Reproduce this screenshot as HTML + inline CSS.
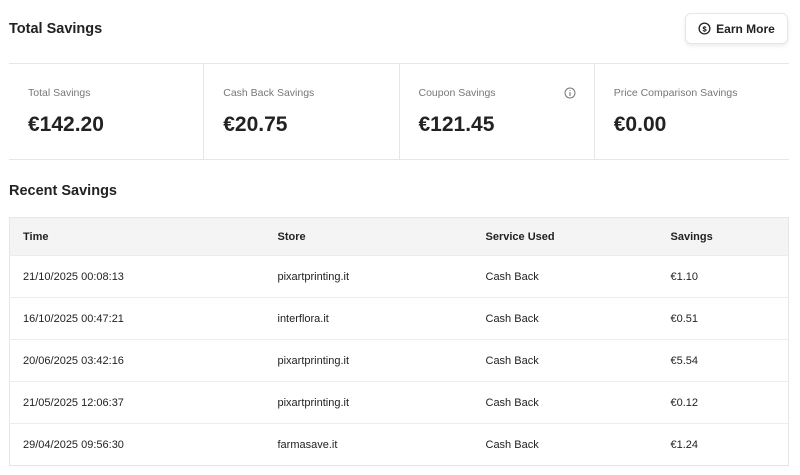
<!DOCTYPE html>
<html><head><meta charset="utf-8"><style>
*{margin:0;padding:0;box-sizing:border-box}
body{width:800px;height:475px;background:#fff;font-family:"Liberation Sans",sans-serif;color:#222;position:relative;overflow:hidden}
.a{position:absolute}
h1{position:absolute;left:9px;top:21px;font-size:14.5px;font-weight:bold;color:#222}
.btn{left:685px;top:13px;width:103px;height:31px;border:1px solid #e6e6e6;border-radius:6px;box-shadow:0 2px 4px rgba(0,0,0,.08);font-size:12px;font-weight:bold;display:flex;align-items:center;justify-content:center;gap:5px}
.stats{left:9px;top:63px;width:780px;height:97px;border-top:1px solid #e6e6e6;border-bottom:1px solid #e6e6e6;display:flex}
.st{flex:1;border-left:1px solid #e6e6e6;padding:23px 0 0 19px;position:relative}
.st:first-child{border-left:none}
.st .l{font-size:10.5px;color:#777}
.st .v{font-size:21px;font-weight:bold;margin-top:14px;color:#222}
table{position:absolute;left:9px;top:217px;width:780px;border-collapse:collapse;border:1px solid #e6e6e6;font-size:11px}
th{background:#f4f4f4;height:38px;text-align:left;font-weight:bold;padding-left:13px}
td{height:42px;padding-left:13px;border-top:1px solid #ececec}
</style></head><body>
<h1>Total Savings</h1>
<div class="a btn"><svg width="13" height="13" viewBox="0 0 14 14"><circle cx="7" cy="7" r="5.8" fill="none" stroke="#222" stroke-width="1.4"/><text x="7" y="10" font-size="8" font-weight="bold" text-anchor="middle" font-family="Liberation Sans">$</text></svg>Earn More</div>
<div class="a stats">
<div class="st"><div class="l">Total Savings</div><div class="v">€142.20</div></div>
<div class="st"><div class="l">Cash Back Savings</div><div class="v">€20.75</div></div>
<div class="st"><div class="l">Coupon Savings</div><div class="v">€121.45</div><svg class="a" style="left:164px;top:23px" width="12" height="12" viewBox="0 0 12 12"><circle cx="6" cy="6" r="5" fill="none" stroke="#777" stroke-width="1"/><path d="M6 5v4M6 3.2v.8" stroke="#777" stroke-width="1.1"/></svg></div>
<div class="st"><div class="l">Price Comparison Savings</div><div class="v">€0.00</div></div>
</div>
<h1 style="top:183px">Recent Savings</h1>
<table>
<colgroup><col style="width:255px"><col style="width:208px"><col style="width:185px"><col></colgroup>
<tr><th>Time</th><th>Store</th><th>Service Used</th><th>Savings</th></tr>
<tr><td>21/10/2025 00:08:13</td><td>pixartprinting.it</td><td>Cash Back</td><td>€1.10</td></tr>
<tr><td>16/10/2025 00:47:21</td><td>interflora.it</td><td>Cash Back</td><td>€0.51</td></tr>
<tr><td>20/06/2025 03:42:16</td><td>pixartprinting.it</td><td>Cash Back</td><td>€5.54</td></tr>
<tr><td>21/05/2025 12:06:37</td><td>pixartprinting.it</td><td>Cash Back</td><td>€0.12</td></tr>
<tr><td>29/04/2025 09:56:30</td><td>farmasave.it</td><td>Cash Back</td><td>€1.24</td></tr>
</table>
</body></html>
